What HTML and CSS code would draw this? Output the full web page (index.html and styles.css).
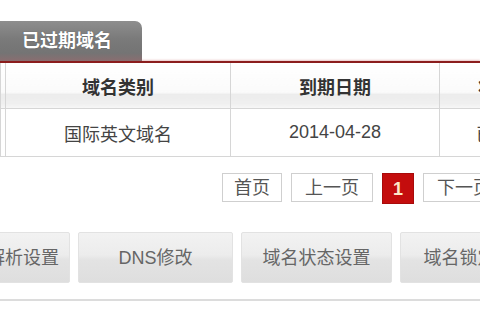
FILE: index.html
```html
<!DOCTYPE html>
<html lang="zh-CN">
<head>
<meta charset="utf-8">
<title>已过期域名</title>
<link rel="stylesheet" href="styles.css">
</head>
<body>
<div class="page">
  <div class="tabbar">
    <div class="tab">已过期域名</div>
  </div>
  <div class="redline"></div>
  <table class="grid">
    <colgroup>
      <col class="c1"><col class="c2"><col class="c3"><col class="c4">
    </colgroup>
    <thead>
      <tr><th></th><th>域名类别</th><th>到期日期</th><th>状态</th></tr>
    </thead>
    <tbody>
      <tr><td></td><td>国际英文域名</td><td>2014-04-28</td><td>已过期</td></tr>
    </tbody>
  </table>
  <div class="pager">
    <span class="pg">首页</span>
    <span class="pg wide">上一页</span>
    <span class="pg cur">1</span>
    <span class="pg wide">下一页</span>
  </div>
  <div class="actions">
    <div class="btn first">域名解析设置</div>
    <div class="btn">DNS修改</div>
    <div class="btn">域名状态设置</div>
    <div class="btn">域名锁定设置</div>
  </div>
  <div class="bottomline"></div>
</div>
</body>
</html>
```
FILE: styles.css
```css
html, body {
  margin: 0;
  padding: 0;
  background: #fff;
  overflow: hidden;
}
.page {
  width: 480px;
  height: 320px;
  overflow: hidden;
  font-family: "Liberation Sans", "Noto Sans CJK SC", sans-serif;
  font-size: 18px;
  color: #444;
}
.tabbar {
  display: flex;
  padding-top: 21px;
}
.tab {
  width: 142px;
  height: 40px;
  box-sizing: border-box;
  padding-left: 22px;
  display: flex;
  align-items: center;
  border-radius: 0 7px 0 0;
  background: linear-gradient(#8e8e8e, #7a7a7a 45%, #747474 80%, #8a6e70);
  color: #fff;
  font-weight: bold;
  font-size: 18px;
  line-height: 20px;
  text-shadow: 0 0 1px #555;
}
.redline {
  height: 2px;
  background: #8b1d1d;
  box-shadow: 0 -1px 2px rgba(190, 80, 80, 0.35);
}
.grid {
  border-collapse: collapse;
  table-layout: fixed;
  width: 620px;
}
.c1 { width: 5px; }
.c2 { width: 225px; }
.c3 { width: 209px; }
.c4 { width: 181px; }
.grid th, .grid td {
  border: 1px solid #d6d6d6;
  border-top: 0;
  text-align: center;
  padding: 0;
  white-space: nowrap;
  overflow: hidden;
}
.grid th {
  height: 45px;
  font-weight: bold;
  color: #333;
  background: linear-gradient(#ffffff, #fafafa 65%, #ececec 70%, #efefef 90%, #f6f6f6);
}
.grid td {
  height: 47px;
  background: #fff;
  color: #444;
}
.grid th:nth-child(4) {
  text-indent: 38px;
  text-align: left;
}
.grid td:nth-child(4) {
  text-indent: 36px;
  text-align: left;
}
.pager {
  display: flex;
  gap: 9px;
  margin-top: 16px;
  padding-left: 222px;
  white-space: nowrap;
}
.pg {
  flex: none;
  width: 60px;
  height: 29px;
  box-sizing: border-box;
  border: 1px solid #cfcfcf;
  background: #fff;
  color: #555;
  display: flex;
  align-items: center;
  justify-content: center;
  line-height: 20px;
}
.pg.wide { width: 82px; }
.pg.cur {
  width: 32px;
  height: 31px;
  background: #c40d0d;
  border-color: #a80a0a;
  color: #fde8c8;
  font-weight: bold;
}
.actions {
  display: flex;
  gap: 8px;
  margin-top: 28px;
  margin-left: -85px;
  white-space: nowrap;
}
.btn {
  flex: none;
  width: 155px;
  height: 51px;
  box-sizing: border-box;
  border: 1px solid #e2e2e2;
  border-radius: 2px;
  background: linear-gradient(#f2f2f2, #ececec 45%, #e3e3e3 55%, #dedede);
  color: #666;
  display: flex;
  align-items: center;
  justify-content: center;
  line-height: 20px;
}
.btn:nth-child(3) { width: 151px; }
.btn.first {
  justify-content: flex-end;
  padding-right: 10px;
}
.bottomline {
  margin-top: 16px;
  height: 2px;
  background: #dcdcdc;
}
```
